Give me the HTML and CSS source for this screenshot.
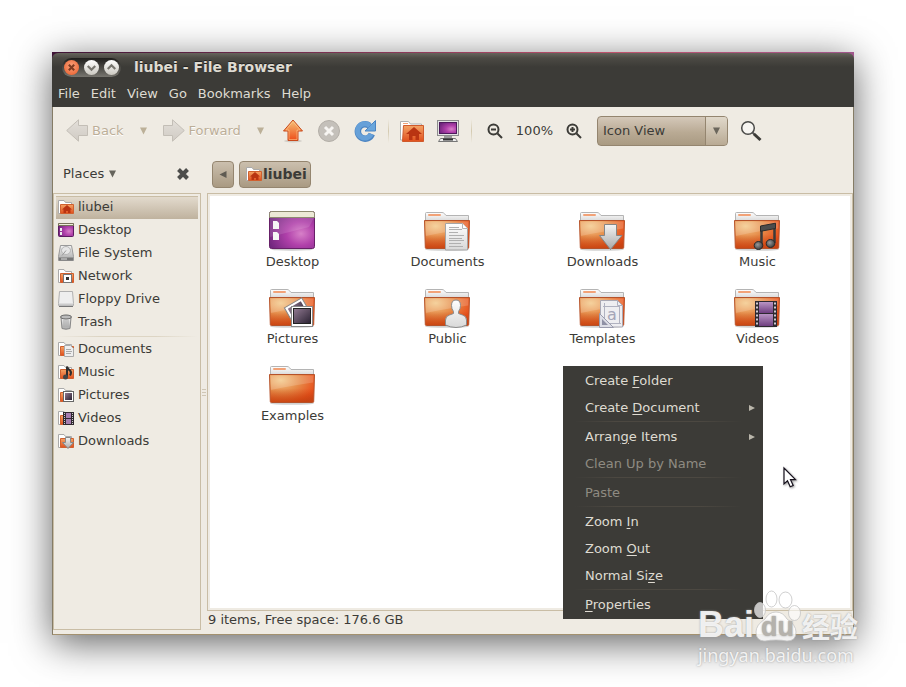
FILE: index.html
```html
<!DOCTYPE html>
<html lang="en">
<head>
<meta charset="utf-8">
<title>liubei - File Browser</title>
<link rel="stylesheet" href="styles.css">
</head>
<body>
<svg class="sprite" aria-hidden="true">
  <defs>
    <radialGradient id="g-folder" cx=".25" cy=".2" r=".95"><stop offset="0" stop-color="#f3c98a"/><stop offset=".45" stop-color="#e68a48"/><stop offset=".85" stop-color="#e8501c"/><stop offset="1" stop-color="#d9471a"/></radialGradient>
    <linearGradient id="g-shade" x2="0" y2="1"><stop offset=".5" stop-color="#b8400c" stop-opacity="0"/><stop offset="1" stop-color="#b8400c" stop-opacity=".6"/></linearGradient>
    <linearGradient id="g-paper" x2="0" y2="1"><stop offset="0" stop-color="#fff"/><stop offset="1" stop-color="#d8d8d8"/></linearGradient>
    <linearGradient id="g-metal" x2="0" y2="1"><stop offset="0" stop-color="#f4f4f4"/><stop offset="1" stop-color="#a8a8a8"/></linearGradient>
    <radialGradient id="g-purple" cx=".7" cy=".6" r=".8"><stop offset="0" stop-color="#d780c8"/><stop offset=".4" stop-color="#b040aa"/><stop offset="1" stop-color="#6a2379"/></radialGradient>
    <linearGradient id="g-photo" x2="1" y2="1"><stop offset="0" stop-color="#927a92"/><stop offset="1" stop-color="#2a2232"/></linearGradient>
    <linearGradient id="g-film" x2="0" y2="1"><stop offset="0" stop-color="#b994c4"/><stop offset="1" stop-color="#6f3f80"/></linearGradient>
    <linearGradient id="g-up" x2="0" y2="1"><stop offset="0" stop-color="#f6c27a"/><stop offset="1" stop-color="#ee4c17"/></linearGradient>
    <linearGradient id="g-dis" x2="0" y2="1"><stop offset="0" stop-color="#e3dfd9"/><stop offset="1" stop-color="#d0cbc4"/></linearGradient>
    <linearGradient id="g-red" x2="0" y2="1"><stop offset="0" stop-color="#f4a466"/><stop offset="1" stop-color="#e04e1c"/></linearGradient>
    <radialGradient id="g-ball" cx=".4" cy=".4" r=".7"><stop offset="0" stop-color="#999"/><stop offset="1" stop-color="#333"/></radialGradient>
  </defs>

  <symbol id="folder" viewBox="0 0 47 42">
    <ellipse cx="23" cy="40.500" rx="22" ry="1.300" fill="#000" opacity=".18"/>
    <path d="M1.500 12V4.500q0-1 1-1H18q1.500 0 2.500 1.200L22 6.500h22.500V12z" fill="url(#g-paper)" stroke="#b4b4b4"/>
    <rect x="4" y="5" width="13" height="2" rx="1" fill="#f2a277"/>
    <path d="M.5 11.500h45l-.8 27q0 1-1 1H2.300q-1 0-1-1z" fill="url(#g-folder)" stroke="#b5522a"/>
    <path d="M1 12h44l-.8 27H1.800z" fill="url(#g-shade)"/>
    <path d="M1.500 12.500h43l-.3 7Q25 22 2 27z" fill="#fff" opacity=".17"/>
  </symbol>
  <symbol id="desktop" viewBox="0 0 47 42">
    <ellipse cx="23" cy="40.500" rx="21" ry="1.200" fill="#000" opacity=".2"/>
    <rect x=".5" y="2.500" width="45" height="37" rx="2" fill="url(#g-purple)" stroke="#672068"/>
    <path d="M.5 8.500V4.500q0-2 2-2h41q2 0 2 2v4z" fill="#ece9d6" stroke="#8d8a70"/>
    <path d="M1 9h44L40 18 1 28z" fill="#fff" opacity=".12"/>
    <path d="M4 12h4l2 2v6H4zM4 23h4l2 2v6H4z" fill="#f5f5f5"/>
  </symbol>
  <symbol id="o-documents" viewBox="0 0 47 42"><path d="M21.500 14.500h17l5 5V41h-22z" fill="url(#g-paper)" stroke="#a5a5a5"/><path d="M38.500 14.500v5h5" fill="#fff" stroke="#b4b4b4"/><path d="M25 18.500h10M25 20.500h13M25 23.500h9M25 26.500h15M25 29.500h13M25 31.500h15M25 34.500h12M25 37.500h14" stroke="#b0b0b0"/></symbol>
  <symbol id="o-downloads" viewBox="0 0 47 42"><path d="M25.500 15.500h12v11h5.500L31.500 40.500 20.500 26.500h5z" fill="url(#g-metal)" stroke="#858585"/></symbol>
  <symbol id="o-music" viewBox="0 0 47 42"><path d="M27.500 36V17M40.500 34V15" fill="none" stroke="#3a3a3a" stroke-width="2.500"/><path d="M26.500 17l15-2.800v5.300l-15 2.800z" fill="#4c4c4c" stroke="#2b2b2b"/><ellipse cx="24.500" cy="36.500" rx="4.300" ry="4" fill="url(#g-ball)" stroke="#2b2b2b"/><ellipse cx="36.500" cy="34.500" rx="4.300" ry="4" fill="url(#g-ball)" stroke="#2b2b2b"/></symbol>
  <symbol id="o-pictures" viewBox="0 0 47 42"><g transform="rotate(-30 27 25)"><rect x="18.500" y="16.500" width="20" height="19" fill="#fff" stroke="#888"/><rect x="21" y="19" width="15" height="14" fill="url(#g-photo)"/></g><rect x="22.500" y="20.500" width="21" height="20" fill="#fff" stroke="#888"/><rect x="24.500" y="22.500" width="17" height="15" fill="url(#g-photo)" stroke="#222"/></symbol>
  <symbol id="o-public" viewBox="0 0 47 42"><path d="M21.500 39v-5q0-4 4-5l4-1.500v-2q-2-2.500-2-6 0-5.500 4.500-5.500t4.500 5.500q0 3.500-2 6v2l4 1.500q4 1 4 5v5q-5 2.500-10.500 2.500T21.500 39z" fill="url(#g-paper)" stroke="#8c8c8c"/></symbol>
  <symbol id="o-templates" viewBox="0 0 47 42"><path d="M21.500 14.500h17l5 5V41h-22z" fill="#eeeef1" stroke="#a9a9b4"/><path d="M38.500 14.500v5h5M25.500 17v21M40.500 20v18M24 20.500h17M24 37.500h18" fill="none" stroke="#b0b2c0"/><path d="M20.500 27.500l14 14h-14z" fill="#dcdde5" stroke="#9a9cae"/><path d="M23 33l6 6h-6z" fill="#8f91a5"/></symbol>
  <symbol id="o-videos" viewBox="0 0 47 42"><rect x="21" y="15" width="22" height="26" fill="#2d2930"/><rect x="25" y="16" width="14" height="11" fill="url(#g-film)"/><rect x="25" y="28" width="14" height="12" fill="url(#g-film)"/><path d="M23 16.500v24M41 16.500v24" stroke="#cfcad2" stroke-width="2" stroke-dasharray="2 2"/></symbol>

  <symbol id="s-folder" viewBox="0 0 16 16"><path d="M.5 14.500V1.500H6l1.500 2h6v11z" fill="#fff" stroke="#aaa"/><path d="M2.500 5.500h13v9h-13z" fill="url(#g-red)" stroke="#d0602f"/></symbol>
  <symbol id="s-home" viewBox="0 0 16 16"><use href="#s-folder"/><path d="M4 10.500L9 6l5 4.500h-1.500V14h-2.500v-2H8v2H5.500v-3.500z" fill="#b93412"/></symbol>
  <symbol id="s-desktop" viewBox="0 0 16 16"><rect x=".5" y="1.500" width="15" height="13" rx="1" fill="url(#g-purple)" stroke="#5b1c60"/><path d="M.5 1.500h15v2H.5z" fill="#f0eedc" stroke="#777259"/><path d="M2 6h2v3H2zM2 10h2v3H2z" fill="#eee"/></symbol>
  <symbol id="s-disk" viewBox="0 0 16 16"><path d="M2.500.5h11l2 11v4H.5v-4z" fill="url(#g-metal)" stroke="#999"/><ellipse cx="8" cy="5.500" rx="4.500" ry="4" fill="#e6e6e6" stroke="#b5b5b5"/><path d="M8 5.500l-4 5" stroke="#999"/><path d="M1 12.500h14v3H1z" fill="#777"/><path d="M3 14h6" stroke="#ddd"/></symbol>
  <symbol id="s-network" viewBox="0 0 16 16"><use href="#s-folder"/><rect x="5.500" y="6.500" width="8" height="8" fill="#fff" stroke="#777"/><rect x="8" y="9" width="3" height="3" fill="#333"/></symbol>
  <symbol id="s-floppy" viewBox="0 0 16 16"><path d="M1.500.5h13l1 12v2H.5v-2z" fill="#eee" stroke="#b0b0b0"/><path d="M1 12.500h14v2H1z" fill="#ccc"/><path d="M1 15.500h14" stroke="#777"/></symbol>
  <symbol id="s-trash" viewBox="0 0 16 16"><path d="M3 3.500h10l-1 11q-4 1.500-8 0z" fill="url(#g-metal)" stroke="#888"/><path d="M6 6v7M8 6v7M10 6v7" stroke="#aaa"/><ellipse cx="8" cy="3" rx="5.500" ry="2" fill="#bbb" stroke="#666"/></symbol>
  <symbol id="s-documents" viewBox="0 0 16 16"><use href="#s-folder"/><path d="M6.500 4.500h6l3 3v8h-9z" fill="#eee" stroke="#aaa"/><path d="M8 8.500h5M8 10.500h6M8 12.500h5" stroke="#aaa"/></symbol>
  <symbol id="s-music" viewBox="0 0 16 16"><use href="#s-folder"/><path d="M9 13V2.500q1 3 3 4 2 2 0 5" fill="none" stroke="#2d2d2d" stroke-width="2"/><circle cx="7.500" cy="13" r="2.500" fill="#444"/></symbol>
  <symbol id="s-pictures" viewBox="0 0 16 16"><use href="#s-folder"/><rect x="5.500" y="4.500" width="10" height="10" fill="#fff" stroke="#666"/><rect x="7" y="6" width="7" height="7" fill="url(#g-photo)"/></symbol>
  <symbol id="s-videos" viewBox="0 0 16 16"><use href="#s-folder"/><path d="M5 2h11v13H5z" fill="#2f2930"/><path d="M8 3h5v5H8zM8 9h5v5H8z" fill="#a57db0"/><path d="M6.500 3v12M14.500 3v12" stroke="#ccc" stroke-dasharray="1 1"/></symbol>
  <symbol id="s-downloads" viewBox="0 0 16 16"><use href="#s-folder"/><path d="M7.500 4.500h5v5h3L10 15.500 4.500 9.500h3z" fill="url(#g-metal)" stroke="#888"/></symbol>
  <symbol id="tri" viewBox="0 0 9 8"><path d="M1 .5h7L4.500 7.500z" fill="currentColor"/></symbol>
</svg>

<div class="window">
  <header class="titlebar">
    <div class="win-buttons">
      <button class="win-btn close" aria-label="Close"><svg viewBox="0 0 14 14"><path d="M4.500 4.500l5 5M9.500 4.500l-5 5"/></svg></button>
      <button class="win-btn" aria-label="Minimize"><svg viewBox="0 0 14 14"><path d="M3.500 5.500L7 9l3.500-3.500"/></svg></button>
      <button class="win-btn" aria-label="Maximize"><svg viewBox="0 0 14 14"><path d="M3.500 8.500L7 5l3.500 3.500"/></svg></button>
    </div>
    <h1>liubei - File Browser</h1>
  </header>
  <nav class="menubar">
    <button>File</button><button>Edit</button><button>View</button><button>Go</button><button>Bookmarks</button><button>Help</button>
  </nav>

  <div class="toolbar">
    <button class="tool text-tool" disabled><svg width="22" height="24" viewBox="0 0 22 24"><path d="M.7 11.500L12.500.8v5.700h9v10h-9v5.700z" fill="url(#g-dis)" stroke="#c3beb6"/></svg>Back</button>
    <button class="tool drop" disabled aria-label="Back history"><svg width="9" height="8"><use href="#tri"/></svg></button>
    <button class="tool text-tool" disabled><svg width="22" height="24" viewBox="0 0 22 24"><path d="M21.300 11.500L9.500.8v5.700h-9v10h9v5.700z" fill="url(#g-dis)" stroke="#c3beb6"/></svg>Forward</button>
    <button class="tool drop" disabled aria-label="Forward history"><svg width="9" height="8"><use href="#tri"/></svg></button>
    <button class="tool" aria-label="Up"><svg width="22" height="24" viewBox="0 0 22 24"><ellipse cx="11" cy="22" rx="9" ry="1.500" opacity=".12"/><path d="M11 1l9.500 11H16v9.500H6V12H1.500z" fill="url(#g-up)" stroke="#c94a1c"/><path d="M11 2.600L18.200 11H15v9.500H7V11H3.800z" fill="none" stroke="#ffd9a0" opacity=".5"/></svg></button>
    <button class="tool" disabled aria-label="Stop"><svg width="24" height="24" viewBox="0 0 24 24"><circle cx="12" cy="12" r="10.500" fill="#c4c0ba" stroke="#b3aea7"/><path d="M8 8l8 8M16 8l-8 8" stroke="#f7f5f2" stroke-width="3"/></svg></button>
    <button class="tool" aria-label="Reload"><svg width="24" height="24" viewBox="0 0 24 24"><path d="M16.500 6.800A7.200 7.200 0 1 0 18.800 15" fill="none" stroke="#4b84c2" stroke-width="6.500"/><path d="M22.500 1.500v10.500H12z" fill="#6aa6dc" stroke="#4b84c2"/><path d="M17 7A7.200 7.200 0 1 0 18.300 15" fill="none" stroke="#66a0d8" stroke-width="4.800"/></svg></button>
    <span class="sep"></span>
    <button class="tool" aria-label="Home"><svg width="26" height="24" viewBox="0 0 26 24"><path d="M1.500 21V2.500h8l2 2.500h11v16z" fill="#fff" stroke="#b0b0b0"/><path d="M4 4.500h5" stroke="#f2a277"/><path d="M4.500 6.500h20v16h-21z" fill="url(#g-red)" stroke="#cf5a2c"/><path d="M7 15l8-7 8 7h-3v6h-3.500v-4h-3v4H10v-6z" fill="#b93412"/></svg></button>
    <button class="tool" aria-label="Computer"><svg width="24" height="24" viewBox="0 0 24 24"><rect x="1.500" y="1.500" width="21" height="15" fill="#e3e3e3" stroke="#8d8d8d"/><rect x="3.500" y="3.500" width="17" height="11" fill="url(#g-purple)" stroke="#4e1a5c"/><path d="M8 17h8v3H8z" fill="#999"/><path d="M2.500 22.500l2-3h15l2 3z" fill="#eee" stroke="#777"/><path d="M7 20.500h10" stroke="#333" stroke-width="2"/></svg></button>
    <span class="sep"></span>
    <div class="zoom">
      <button class="tool" aria-label="Zoom out"><svg class="lens" width="16" height="16" viewBox="0 0 16 16"><circle cx="6.500" cy="6.500" r="5"/><path d="M4 6.500h5M10.500 10.500L15 15"/></svg></button>
      <span class="level">100%</span>
      <button class="tool" aria-label="Zoom in"><svg class="lens" width="16" height="16" viewBox="0 0 16 16"><circle cx="6.500" cy="6.500" r="5"/><path d="M4 6.500h5M6.500 4v5M10.500 10.500L15 15"/></svg></button>
    </div>
    <div class="combo">
      <select aria-label="View mode"><option>Icon View</option><option>List View</option><option>Compact View</option></select>
      <span class="combo-arrow"><svg width="9" height="8"><use href="#tri"/></svg></span>
    </div>
    <button class="tool" aria-label="Search"><svg width="22" height="22" viewBox="0 0 22 22"><circle cx="8" cy="8" r="6.300" fill="#f7f5f1" stroke="#4a4a48" stroke-width="1.500"/><path d="M12.500 12.500l2 2" stroke="#555" stroke-width="2"/><path d="M14 14l6.500 6" stroke="#3c3b37" stroke-width="3"/></svg></button>
  </div>

  <div class="body">
    <div class="side">
      <div class="side-head">
        <button class="places">Places <svg width="9" height="8"><use href="#tri"/></svg></button>
        <button class="side-close" aria-label="Close sidebar"><svg width="14" height="14" viewBox="0 0 14 14"><path d="M2.500 2.500l9 9M11.500 2.500l-9 9" stroke="#4d4d4b" stroke-width="4"/></svg></button>
      </div>
      <ul class="places-list">
        <li><a href="#" class="selected"><svg><use href="#s-home"/></svg>liubei</a></li>
        <li><a href="#"><svg><use href="#s-desktop"/></svg>Desktop</a></li>
        <li><a href="#"><svg><use href="#s-disk"/></svg>File System</a></li>
        <li><a href="#"><svg><use href="#s-network"/></svg>Network</a></li>
        <li><a href="#"><svg><use href="#s-floppy"/></svg>Floppy Drive</a></li>
        <li><a href="#"><svg><use href="#s-trash"/></svg>Trash</a></li>
        <li class="divider"></li>
        <li><a href="#"><svg><use href="#s-documents"/></svg>Documents</a></li>
        <li><a href="#"><svg><use href="#s-music"/></svg>Music</a></li>
        <li><a href="#"><svg><use href="#s-pictures"/></svg>Pictures</a></li>
        <li><a href="#"><svg><use href="#s-videos"/></svg>Videos</a></li>
        <li><a href="#"><svg><use href="#s-downloads"/></svg>Downloads</a></li>
      </ul>
    </div>
    <div class="splitter"><i></i><i></i><i></i></div>
    <main class="content">
      <div class="pathbar">
        <button class="path-prev" aria-label="Previous"><svg width="8" height="9" viewBox="0 0 8 9"><path d="M7.500 1v7L.5 4.500z" fill="#5f5b52"/></svg></button>
        <button class="path-cur"><svg width="16" height="16"><use href="#s-home"/></svg>liubei</button>
      </div>
      <div class="pane">
        <ul class="files">
          <li><svg><use href="#desktop"/></svg>Desktop</li>
          <li><svg><use href="#folder"/><use href="#o-documents"/></svg>Documents</li>
          <li><svg><use href="#folder"/><use href="#o-downloads"/></svg>Downloads</li>
          <li><svg><use href="#folder"/><use href="#o-music"/></svg>Music</li>
          <li><svg><use href="#folder"/><use href="#o-pictures"/></svg>Pictures</li>
          <li><svg><use href="#folder"/><use href="#o-public"/></svg>Public</li>
          <li><svg viewBox="0 0 47 42"><use href="#folder"/><use href="#o-templates"/><text x="28" y="34" class="glyph">a</text></svg>Templates</li>
          <li><svg><use href="#folder"/><use href="#o-videos"/></svg>Videos</li>
          <li><svg><use href="#folder"/></svg>Examples</li>
        </ul>
        <div class="context" role="menu">
          <button role="menuitem"><span>Create <u>F</u>older</span></button>
          <button role="menuitem"><span>Create <u>D</u>ocument</span><svg width="6" height="8" viewBox="0 0 6 8"><path d="M0 1l6 3-6 3z"/></svg></button>
          <hr>
          <button role="menuitem"><span>Arran<u>g</u>e Items</span><svg width="6" height="8" viewBox="0 0 6 8"><path d="M0 1l6 3-6 3z"/></svg></button>
          <button role="menuitem" disabled><span>Clean Up by Name</span></button>
          <hr>
          <button role="menuitem" disabled><span>Paste</span></button>
          <hr>
          <button role="menuitem"><span>Zoom <u>I</u>n</span></button>
          <button role="menuitem"><span>Zoom <u>O</u>ut</span></button>
          <button role="menuitem"><span>Normal Si<u>z</u>e</span></button>
          <hr>
          <button role="menuitem"><span><u>P</u>roperties</span></button>
        </div>
        <svg class="pointer" width="16" height="23" viewBox="0 0 16 23"><path d="M2 2v16l3.500-3.200 2.700 6 3-1.300-2.700-5.800h5z" fill="#fff" stroke="#15101c" stroke-width="1.200"/></svg>
      </div>
      <footer class="status">9 items, Free space: 176.6 GB</footer>
    </main>
  </div>

  <div class="watermark">
    <div class="brand">
      <span>Bai</span>
      <svg width="46" height="54" viewBox="0 0 46 54"><g fill="#fff" stroke="#c4c4c4" stroke-opacity=".8"><ellipse cx="6" cy="21" rx="5.500" ry="7.500" fill-opacity=".7"/><ellipse cx="17.500" cy="10" rx="5.500" ry="8" fill-opacity=".6"/><ellipse cx="31.500" cy="11" rx="6.500" ry="8" fill-opacity=".6"/><ellipse cx="40.500" cy="24" rx="6" ry="7.500" fill-opacity=".6"/><path d="M22 23q7 0 11 7 9 6 9 13 0 9-9 9-5-1-11-1-6 0-11 1-9 0-9-9 0-7 9-13 4-7 11-7z" fill-opacity=".85"/></g><text x="7" y="47" class="du">du</text></svg>
      <span class="cjk" lang="zh">经验</span>
    </div>
    <div class="url">jingyan.baidu.com</div>
  </div>
</div>
</body>
</html>
```
FILE: styles.css
```css
* { box-sizing: border-box; }

body {
  margin: 0;
  padding: 52px;
  background: #fff;
  color: #3c3b37;
  font: 13px/20px "DejaVu Sans", sans-serif;
}

ul { margin: 0; padding: 0; list-style: none; }
svg { display: block; flex: none; }

button {
  display: flex;
  align-items: center;
  padding: 0;
  border: 0;
  background: none;
  color: inherit;
  font: inherit;
}

.sprite { position: absolute; width: 0; height: 0; }
.glyph { font: 16px "DejaVu Sans", sans-serif; fill: #a4a6b8; }

.window {
  position: relative;
  display: flex;
  flex-direction: column;
  min-height: calc(100vh - 104px);
  padding-top: 1px;
  background: linear-gradient(90deg, #3f1436, #8e3a5a 45%, #c0526c 70%, #a0568c) top / 100% 8px no-repeat, #efebe3;
  box-shadow: 0 8px 36px rgba(0, 0, 0, .62);
}

.titlebar {
  display: flex;
  align-items: center;
  gap: 13px;
  height: 28px;
  padding-left: 10px;
  border-radius: 6px 6px 0 0;
  background: linear-gradient(#66645c, #4c4a44 5px, #3c3b37 14px);
  color: #dfdbd2;
}

.titlebar h1 { margin: 0; font-size: 14px; line-height: 20px; font-weight: bold; text-shadow: 0 -1px #222; }

.win-buttons {
  display: flex;
  gap: 5px;
  padding: 2px;
  border-radius: 10px;
  background: linear-gradient(#1f1e1c, #77756e);
}

.win-btn { width: 15px; height: 15px; border-radius: 50%; background: linear-gradient(#fff, #cbc8c0); }
.win-btn svg { width: 15px; height: 15px; fill: none; stroke: #77756e; stroke-width: 2; }
.win-btn.close { background: radial-gradient(circle at 50% 40%, #f9a27c, #ea5a26); }
.win-btn.close svg { stroke: #7e3c22; }

.menubar {
  display: flex;
  gap: 11px;
  height: 26px;
  padding: 0 5px 0 6px;
  background: #3c3b37;
  color: #dfdbd2;
}

.toolbar, .body { border: solid #857c66; border-width: 0 1px; background: #efebe3; }

.toolbar { display: flex; align-items: center; gap: 10px; height: 48px; padding-left: 13px; }
.tool { justify-content: center; min-width: 26px; height: 28px; }
.text-tool { gap: 4px; color: #bcae98; text-shadow: 0 1px #fff; }
.tool.drop { min-width: 19px; color: #bcb098; }
.sep { width: 1px; height: 24px; background: linear-gradient(#efebe3, #d4cab0, #efebe3); }
.zoom { display: flex; align-items: center; gap: 8px; }
.lens { fill: none; stroke: #3c3b37; stroke-width: 2; }

.combo { position: relative; width: 131px; height: 30px; }
.combo select {
  appearance: none;
  width: 100%;
  height: 100%;
  padding: 0 28px 0 5px;
  border: 1px solid #94856f;
  border-radius: 4px;
  background: linear-gradient(#d4c8b9, #b9aa94 55%, #a99a82);
  color: inherit;
  font: inherit;
}
.combo-arrow {
  position: absolute;
  inset: 1px 1px 1px auto;
  display: grid;
  place-items: center;
  width: 22px;
  border-left: 1px solid #94856f;
  border-radius: 0 3px 3px 0;
  background: linear-gradient(#e0d8ca, #b9aa94);
  color: #6b665c;
  pointer-events: none;
}

.body {
  display: grid;
  grid-template-columns: 148px 6px 1fr;
  flex: 1;
  padding-bottom: 4px;
  border-bottom: 1px solid #a3916f;
}

.side, .content { display: flex; flex-direction: column; min-width: 0; }
.side-head { display: flex; align-items: center; justify-content: space-between; height: 38px; padding: 0 11px 0 10px; }
.places { gap: 4px; }
.places svg { color: #66645c; }

.places-list { flex: 1; padding: 2px; border: 1px solid #c9bda5; }
.places-list a {
  display: flex;
  align-items: center;
  gap: 4px;
  height: 23px;
  padding: 0 0 1px 2px;
  color: inherit;
  text-decoration: none;
}
.places-list svg { width: 16px; height: 16px; }
.places-list .selected { background: linear-gradient(#e4dccf, #bfb29e); box-shadow: inset 0 1px #c9bda5; }
.divider { height: 4px; background: linear-gradient(90deg, #efebe3, #ddd5c4 30%, #ddd5c4 70%, #efebe3) center / 100% 1px no-repeat; }

.splitter { display: flex; flex-direction: column; align-items: center; justify-content: center; gap: 2px; }
.splitter i { width: 4px; height: 1px; background: #cfc6b4; }

.pathbar { display: flex; align-items: center; gap: 5px; height: 38px; padding-left: 5px; }
.path-prev, .path-cur {
  justify-content: center;
  height: 27px;
  border: 1px solid #94856f;
  border-radius: 4px;
  background: linear-gradient(#cbbfae, #a99a82);
}
.path-prev { width: 22px; }
.path-cur { gap: 1px; padding: 0 3px 0 6px; font-size: 14px; font-weight: bold; }

.pane {
  position: relative;
  flex: 1;
  padding: 12px 0 12px 5px;
  border: 1px solid #c9bda5;
  background: #fff;
  box-shadow: inset 0 0 0 2px #efebe3;
}

.files { display: grid; grid-template-columns: repeat(auto-fill, 155px); grid-auto-rows: 77px; padding: 3px 0 0 2px; }
.files li { display: flex; flex-direction: column; align-items: center; gap: 1px; }
.files svg { width: 47px; height: 42px; }

.context {
  position: absolute;
  top: 172px;
  left: 355px;
  width: 200px;
  padding: 1px;
  background: #3c3b37;
  color: #dfdbd2;
}
.context button { justify-content: space-between; width: 100%; height: 27px; padding: 0 7px 0 21px; }
.context button:disabled { color: #8f8b82; }
.context svg { fill: #bab6ab; }
.context hr { height: 1px; margin: 0 20px 1px 10px; border: 0; background: linear-gradient(90deg, #3c3b37, #4c4841 25%, #4c4841 75%, #3c3b37); }
.context u { text-underline-offset: 2px; }

.pointer { position: absolute; top: 272px; left: 574px; filter: drop-shadow(1px 1px 1px rgba(0, 0, 0, .4)); }

.status { height: 19px; padding-left: 1px; line-height: 18px; }

.watermark {
  position: absolute;
  right: -4px;
  bottom: -32px;
  color: rgba(255, 255, 255, .85);
  text-shadow: 0 0 2px #999;
  pointer-events: none;
}
.brand { display: flex; align-items: flex-end; height: 54px; font: bold 36px/36px "Liberation Sans", sans-serif; }
.brand svg { overflow: visible; }
.brand .cjk { padding-left: 2px; font: bold 28px/34px "Noto Sans CJK SC", sans-serif; }
.du { font: bold 27px "Liberation Sans", sans-serif; fill: #b5b2ac; }
.url { font: 18px/24px "Noto Sans", sans-serif; }
```
